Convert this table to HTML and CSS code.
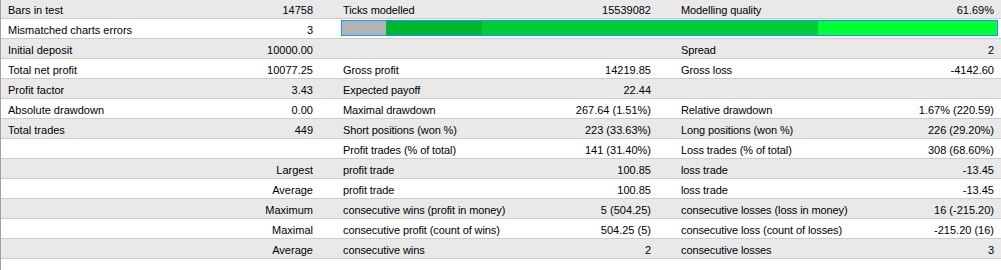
FILE: index.html
```html
<!DOCTYPE html>
<html>
<head>
<meta charset="utf-8">
<link rel="stylesheet" href="styles.css">
</head>
<body>
<div class="report">
  <div class="row alt">
    <div class="c1">Bars in test</div><div class="c2">14758</div>
    <div class="c3">Ticks modelled</div><div class="c4">15539082</div>
    <div class="c5">Modelling quality</div><div class="c6">61.69%</div>
  </div>
  <div class="row">
    <div class="c1">Mismatched charts errors</div><div class="c2">3</div>
    <div class="barcell">
      <div class="bar">
        <div class="seg seg-gray" style="width:44px"></div>
        <div class="seg seg-dark" style="width:96px"></div>
        <div class="seg seg-mid" style="width:336px"></div>
        <div class="seg seg-bright"></div>
      </div>
    </div>
  </div>
  <div class="row alt">
    <div class="c1">Initial deposit</div><div class="c2">10000.00</div>
    <div class="c3"></div><div class="c4"></div>
    <div class="c5">Spread</div><div class="c6">2</div>
  </div>
  <div class="row">
    <div class="c1">Total net profit</div><div class="c2">10077.25</div>
    <div class="c3">Gross profit</div><div class="c4">14219.85</div>
    <div class="c5">Gross loss</div><div class="c6">-4142.60</div>
  </div>
  <div class="row alt">
    <div class="c1">Profit factor</div><div class="c2">3.43</div>
    <div class="c3">Expected payoff</div><div class="c4">22.44</div>
    <div class="c5"></div><div class="c6"></div>
  </div>
  <div class="row">
    <div class="c1">Absolute drawdown</div><div class="c2">0.00</div>
    <div class="c3">Maximal drawdown</div><div class="c4">267.64 (1.51%)</div>
    <div class="c5">Relative drawdown</div><div class="c6">1.67% (220.59)</div>
  </div>
  <div class="row alt">
    <div class="c1">Total trades</div><div class="c2">449</div>
    <div class="c3">Short positions (won %)</div><div class="c4">223 (33.63%)</div>
    <div class="c5">Long positions (won %)</div><div class="c6">226 (29.20%)</div>
  </div>
  <div class="row">
    <div class="c1"></div><div class="c2"></div>
    <div class="c3">Profit trades (% of total)</div><div class="c4">141 (31.40%)</div>
    <div class="c5">Loss trades (% of total)</div><div class="c6">308 (68.60%)</div>
  </div>
  <div class="row alt">
    <div class="c1"></div><div class="c2">Largest</div>
    <div class="c3">profit trade</div><div class="c4">100.85</div>
    <div class="c5">loss trade</div><div class="c6">-13.45</div>
  </div>
  <div class="row">
    <div class="c1"></div><div class="c2">Average</div>
    <div class="c3">profit trade</div><div class="c4">100.85</div>
    <div class="c5">loss trade</div><div class="c6">-13.45</div>
  </div>
  <div class="row alt">
    <div class="c1"></div><div class="c2">Maximum</div>
    <div class="c3">consecutive wins (profit in money)</div><div class="c4">5 (504.25)</div>
    <div class="c5">consecutive losses (loss in money)</div><div class="c6">16 (-215.20)</div>
  </div>
  <div class="row">
    <div class="c1"></div><div class="c2">Maximal</div>
    <div class="c3">consecutive profit (count of wins)</div><div class="c4">504.25 (5)</div>
    <div class="c5">consecutive loss (count of losses)</div><div class="c6">-215.20 (16)</div>
  </div>
  <div class="row alt">
    <div class="c1"></div><div class="c2">Average</div>
    <div class="c3">consecutive wins</div><div class="c4">2</div>
    <div class="c5">consecutive losses</div><div class="c6">3</div>
  </div>
</div>
</body>
</html>
```

FILE: styles.css
```css
html, body {
  margin: 0;
  padding: 0;
  background: #ffffff;
}

body {
  font-family: "Liberation Sans", Arial, sans-serif;
  font-size: 11px;
  color: #000000;
  overflow: hidden;
}

.report {
  margin-top: -1px;
  border-left: 1px solid #a0a0a0;
  min-height: 275px;
  width: 1000px;
}

.row {
  display: grid;
  grid-template-columns: 169px 150px 180px 158px 172px 171px;
  height: 19px;
  border-bottom: 1px solid #cccccc;
  background: #ffffff;
}

.row.alt {
  background: #e9e9e9;
}

.row > div {
  padding-top: 3px;
  line-height: 16px;
  white-space: nowrap;
  min-width: 0;
}

.c1 {
  padding-left: 7px;
}

.c2, .c4, .c6 {
  text-align: right;
  padding-right: 7px;
}

.c3, .c5 {
  padding-left: 23px;
  letter-spacing: -0.1px;
}

.row > .barcell {
  grid-column: 3 / 7;
  padding: 1px 3px 0 21px;
  line-height: normal;
}

.bar {
  display: flex;
  height: 14px;
  border: 1px solid #0f9ff0;
}

.seg {
  height: 100%;
  flex: none;
}

.seg-gray {
  background: #b3b3b3;
}

.seg-dark {
  background: #00b62e;
}

.seg-mid {
  background: #00cc33;
}

.seg-bright {
  flex: 1;
  background: #00ff33;
}
```
